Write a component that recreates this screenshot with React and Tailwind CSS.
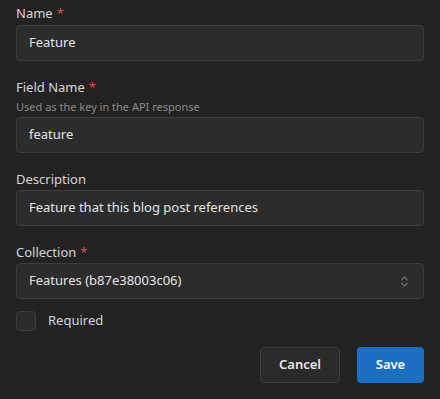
import { ChevronsUpDown } from "lucide-react";

const Label = ({ children, required }) => (
  <label className="block text-[13px] leading-[18px] text-[#d6d6d6]">
    {children}
    {required && <span className="ml-1 text-[#d9534f]">*</span>}
  </label>
);

const Input = ({ value, className = "mt-[3px]" }) => (
  <div
    className={`${className} flex h-[36px] items-center rounded-[4px] border border-[#3d3d3d] bg-[#2c2c2c] px-3 text-[13px] text-[#e4e4e4]`}
  >
    {value}
  </div>
);

export default function App() {
  return (
    <div
      className="h-[399px] w-[440px] bg-[#222222] px-4 pt-[4px]"
      style={{ fontFamily: '"Noto Sans", "Open Sans", sans-serif' }}
    >
      <div className="flex flex-col gap-[17px]">
        <div>
          <Label required>Name</Label>
          <Input value="Feature" />
        </div>
        <div>
          <Label required>Field Name</Label>
          <p className="mt-[4px] text-[11px] leading-[14px] text-[#8a8a8a]">
            Used as the key in the API response
          </p>
          <Input value="feature" className="mt-[3px]" />
        </div>
        <div>
          <Label>Description</Label>
          <Input value="Feature that this blog post references" className="mt-[2px]" />
        </div>
        <div>
          <Label required>Collection</Label>
          <div className="mt-[2px] flex h-[36px] items-center justify-between rounded-[4px] border border-[#3d3d3d] bg-[#2c2c2c] px-3 text-[13px] text-[#e4e4e4]">
            <span>Features (b87e38003c06)</span>
            <ChevronsUpDown size={13} className="text-[#777]" />
          </div>
        </div>
      </div>
      <div className="mt-[12px] flex items-center gap-3">
        <div className="h-[20px] w-[20px] rounded-[4px] border border-[#3d3d3d] bg-[#2c2c2c]" />
        <span className="text-[13px] text-[#d6d6d6]">Required</span>
      </div>
      <div className="mt-[16px] flex justify-end gap-[17px]">
        <button className="h-[36px] w-[80px] rounded-[4px] border border-[#3d3d3d] bg-[#2a2a2a] text-[13px] font-semibold text-[#e8e8e8]">
          Cancel
        </button>
        <button className="h-[36px] w-[67px] rounded-[4px] bg-[#1b6ec2] text-[13px] font-semibold text-white">
          Save
        </button>
      </div>
    </div>
  );
}
